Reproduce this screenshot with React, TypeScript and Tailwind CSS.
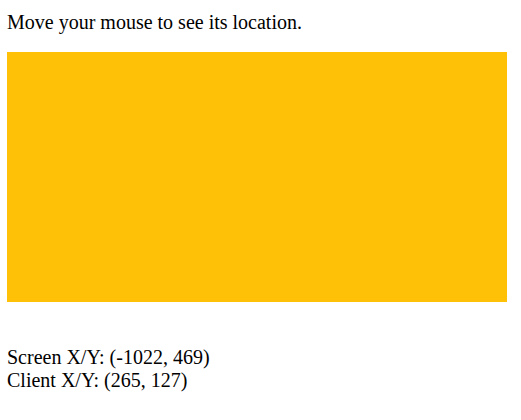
export default function App() {
  return (
    <div className="min-h-screen bg-white pl-[7px] pt-[11px] font-['Liberation_Serif',serif] text-[20px] leading-[23px] text-black">
      <p>Move your mouse to see its location.</p>
      <div className="mt-[18px] h-[250px] w-[500px] bg-[#fec107]" />
      <p className="mt-[44px]">
        Screen X/Y: (-1022, 469)
        <br />
        Client X/Y: (265, 127)
      </p>
    </div>
  );
}
